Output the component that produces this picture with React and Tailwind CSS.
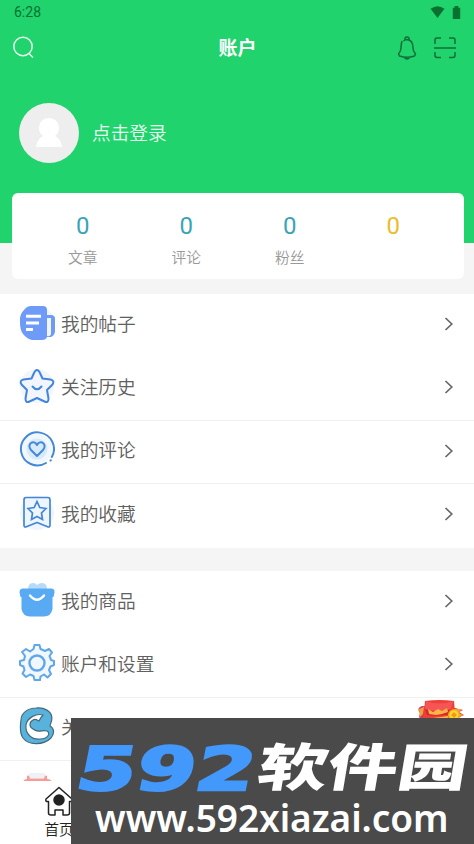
import React from "react";

const PostIcon = () => (
  <svg viewBox="0 0 36 36" className="size-9">
    <circle cx="18.5" cy="18" r="17" fill="#f0f5fe" />
    <path d="M12 1H24Q28 1 28 5V10H32Q36 10 36 14V27Q35 31 32 32H28Q27 35 23 35H13Q8 34 4 29Q1 25 1 18V14Q1 9 5 5Q8 1 12 1Z" fill="#6e9bf8" />
    <path d="M28 13H32V29Q31 32 28 31Z" fill="#f0f5fe" />
    <path d="M7 11.3H22M7 18H20M7 24.5H14" stroke="#fff" strokeWidth="3" />
  </svg>
);

const StarIcon = () => (
  <svg viewBox="0 0 36 36" className="size-9" fill="none" stroke="#4285dc" strokeWidth="2" strokeLinejoin="round" strokeLinecap="round">
    <circle cx="18" cy="18" r="17" fill="#f2f6fc" stroke="none" />
    <path d="M15.500 4Q18 0 20.500 4L23.500 10.500L31.500 11.500Q36 12.500 33.500 16.500L28 22L29.500 30.500Q29.500 35.500 25.500 33.500L18 30L10.500 33.500Q6.500 35.500 6.500 30.500L8 22L2.500 16.500Q0 12.500 4.500 11.500L12.500 10.500Z" />
    <path d="M13.500 18.500Q18 24 22.500 18.500" />
  </svg>
);

const CommentIcon = () => (
  <svg viewBox="0 0 36 36" className="size-9" fill="none" stroke="#4488d8" strokeWidth="2" strokeLinecap="round">
    <circle cx="18" cy="18" r="15" fill="#f0f7fe" stroke="none" />
    <circle cx="18" cy="18" r="10.500" fill="#d7eafb" stroke="none" />
    <path d="M27 32A16.500 16.500 0 1 1 32.800 26M31.500 29.500L31.800 29.200" />
    <path d="M18 25L12 19C7 13 15 8 18 14C21 8 29 13 24 19Z" strokeLinejoin="round" />
  </svg>
);

const FavoriteIcon = () => (
  <svg viewBox="0 0 36 36" className="size-9" fill="none" stroke="#4385d8" strokeWidth="1.700" strokeLinejoin="round" strokeLinecap="round">
    <circle cx="18" cy="18" r="17" fill="#f0f5fc" stroke="none" />
    <path d="M7 2.500H29Q31 2.500 31 5V30Q31 33 28 31.500L18 27.500L8 31.500Q5 33 5 30V5Q5 2.500 7 2.500Z" fill="#edf5fd" />
    <path d="M18 6.500L20.800 12.500L27 13.500L22.500 18L23.500 24.500L18 21.500L12.500 24.500L13.500 18L9 13.500L15.200 12.500Z" strokeLinejoin="miter" />
  </svg>
);

const GoodsIcon = () => (
  <svg viewBox="0 0 36 36" className="size-9">
    <path d="M9 7Q9 1 14 1Q17 1 18 3Q20 1 23 1Q28 1 28 7Z" fill="#b8daf9" />
    <path d="M4 6.500H32Q36 6.500 35.500 10.500L34.500 15H33.500V27Q32 34.500 25 34.500H11Q4 34.500 2.500 27V15H1.500L.5 10.500Q.5 6.500 4 6.500Z" fill="#58aaf2" />
    <path d="M11 13.500Q18 22 25 13.500" fill="none" stroke="white" strokeWidth="2.400" strokeLinecap="round" />
  </svg>
);

const GearIcon = () => (
  <svg viewBox="0 0 36 37" className="h-[37px] w-9" fill="#f0f7fe" stroke="#60a7e9" strokeWidth="2" strokeLinejoin="round">
    <path d="M15.500 1H20.500L21.500 5Q24 6 26 7L30 5L33 8.500L30.500 12Q31.500 14 32 16L35 17V21L31.500 22.500L30 26L32 30L28.500 33.500L25 30.500L21.500 32.500L21 36H15.500L14.500 32L11 30.500L7 33L3.500 29.500L5.500 26L4.500 22.500L1 21V17L5 16L6 12L3 8L7 5L11 7.500L14.500 5Z" />
    <circle cx="18" cy="19" r="7.500" strokeWidth="2.400" />
  </svg>
);

const AboutIcon = () => (
  <svg viewBox="0 0 36 38" className="h-[38px] w-9" stroke="#47687b" strokeWidth="1.200">
    <path d="M17 1C26 0 32 5 32.500 9C34 13 31 17 31 19C35 21 36 26 32 31C24 39 9 38 4 31C1 27 1 20 2 13C2 6 9 1 17 1Z" fill="#58b3dc" />
    <path d="M24 8C17 6 8 11 7 18C6 27 13 33 21 32C29 32 32 26 28 24C23 22 20 27 14 22C10 20 10 15 14 13C17 11 19 14 20 14C21 12 22 10 24 8Z" fill="white" />
  </svg>
);

const CalendarIcon = () => (
  <svg viewBox="0 0 36 36" className="size-9">
    <path d="M11 1H25L29 6H7Z" fill="#f0f1f4" />
    <path d="M4 10Q5 7 8 7V4Q10 2 11 6.500H25Q26 2 28 4V7Q32 7 33 10V33H4Z" fill="#f59b9b" />
  </svg>
);

const RedPacket = () => (
  <svg viewBox="0 0 48 24" className="h-6 w-12">
    <path d="M5 6Q-1 8 3 13L2 17L8 24H43L41 18L47 15L42 12L46 10L38 8" fill="#c93f64" />
    <path d="M2 9L7 7L6 14L3 17ZM38 9L45 9L41 13L47 15L39 18Z" fill="#f3a234" />
    <path d="M8 1Q22-1 37 1L39 24H5L7 11Z" fill="#ef3f39" />
    <path d="M9 1Q22 6 36 1L34 9Q21 13 8 9Z" fill="#f65556" />
    <path d="M8 9Q21 14 35 9L34 14Q20 17 10 15Z" fill="#d8252f" />
    <path d="M11 9L16 12L21 9L25 11L30 8L31 12L25 14L19 15L12 14ZM16 18L31 16L32 20L17 21Z" fill="#ffb447" />
    <circle cx="37" cy="15" r="6" fill="#f5ac14" />
    <circle cx="37" cy="15" r="4.500" fill="#ffd833" />
    <path d="M34 15L37 12L40 15L37 18Z" fill="#ee981e" />
  </svg>
);

const Chevron = () => (
  <svg viewBox="0 0 10 16" className="ml-auto mt-[3px] h-4 w-2.5" fill="none" stroke="#686868" strokeWidth="1.700">
    <path d="M1.500 2L7.800 8L1.500 14" />
  </svg>
);

function Row({ icon, label, line }) {
  return (
    <div className={"flex h-[63.3px] shrink-0 items-center border-b pl-[19px] pr-5 pb-[5px] " + (line ? "border-[#f0f0f0]" : "border-transparent")}>
      <span className="flex w-9 justify-center">{icon}</span>
      <span className="ml-1.5 whitespace-nowrap text-[18.7px] leading-7">{label}</span>
      <Chevron />
    </div>
  );
}

const stats = [["文章", "text-[#3aa4b7]"], ["评论", "text-[#3aa4b7]"], ["粉丝", "text-[#3aa4b7]"], ["", "text-[#ebbd2b]"]];

export default function App() {
  return (
    <div className="relative flex h-[844px] w-[474px] flex-col overflow-hidden bg-[#f5f5f5] font-['Noto_Sans_CJK_SC',sans-serif] font-[350] text-[#606060]">
      <header className="h-[243px] shrink-0 bg-[#20d36c]">
        <div className="flex h-6 items-center justify-between pl-3.5 pr-[13px] text-[#08712f]">
          <span className="font-['Roboto',sans-serif] text-[14px] font-normal">6:28</span>
          <div className="flex items-center gap-[7px]">
            <svg viewBox="0 0 16 13" className="h-3 w-[15px]" fill="#08712f"><path d="M.5 3Q8-2.500 15.500 3L8 13Z" /></svg>
            <svg viewBox="0 0 9 14" className="h-[13px] w-[9px]" fill="#08712f"><path d="M2.500 0H6.500V2H8.500V14H.5V2H2.500Z" /></svg>
          </div>
        </div>
        <div className="grid h-12 grid-cols-3 items-center pl-3 pr-[18px]">
          <svg viewBox="0 0 24 24" className="size-6" fill="none" stroke="#e7ffee" strokeWidth="1.500"><circle cx="11" cy="10.500" r="9.200" /><path d="M16.500 17L21 21.500" /></svg>
          <h1 className="pb-0.5 pl-[7px] text-center text-[19px] font-bold leading-7 text-white">账户</h1>
          <div className="flex items-center justify-end gap-[17px]">
            <svg viewBox="0 0 20 24" className="h-6 w-5" fill="none" stroke="#116d39" strokeWidth="1.500" strokeLinejoin="round"><path d="M5 5Q4 8 4 12Q4 15 1.500 18L2.500 20Q10 22.500 17.500 20L18.500 18Q16 15 16 12Q16 4 10 3.500Q8 3.500 6.500 5M8 3.500Q7.500 1 10 1Q12.500 1 12 3.500M7 21Q10 25 13 21" /></svg>
            <svg viewBox="0 0 22 22" className="size-[22px]" fill="none" stroke="#116d39" strokeWidth="1.500"><path d="M1 7V3Q1 1 3 1H7M15 1H19Q21 1 21 3V7M1 15V18Q1 20.500 3 20.500H7M15 20.500H19Q21 20.500 21 18V15M0 11H22" /></svg>
          </div>
        </div>
        <div className="flex h-[122px] items-center gap-[13px] pl-[19px]">
          <div className="flex size-[60px] items-center justify-center rounded-full bg-[#eee]">
            <svg viewBox="0 0 26 30" className="h-[30px] w-[26px]" fill="white"><path d="M13 0A10 10 0 0 1 19 18Q25 21 26 29H0Q1 21 7 18A10 10 0 0 1 13 0Z" /></svg>
          </div>
          <span className="pb-[3px] text-[18.7px] leading-7 text-[#e9fff1]">点击登录</span>
        </div>
      </header>
      <section className="relative z-10 -mt-[50px] mx-3 mr-[10px] grid h-[86px] shrink-0 grid-cols-4 rounded-md bg-white pl-[19px] pr-[19px]">
        {stats.map(([label, color], i) => (
          <div key={i} className="flex flex-col items-center pt-[18px]">
            <span className={"font-['Roboto',sans-serif] text-2xl font-normal leading-[30px] " + color}>0</span>
            <span className="mt-1.5 text-[14.7px] leading-5 text-[#999]">{label}</span>
          </div>
        ))}
      </section>
      <section className="mt-[15px] h-[254px] shrink-0 bg-white">
        <Row icon={<PostIcon />} label="我的帖子" />
        <Row icon={<StarIcon />} label="关注历史" line />
        <Row icon={<CommentIcon />} label="我的评论" line />
        <Row icon={<FavoriteIcon />} label="我的收藏" />
      </section>
      <section className="mt-[23px] shrink-0 bg-white">
        <Row icon={<GoodsIcon />} label="我的商品" />
        <Row icon={<GearIcon />} label="账户和设置" line />
        <Row icon={<AboutIcon />} label="关" line />
        <Row icon={<CalendarIcon />} label="" />
      </section>
      <div className="absolute left-[417px] top-[700px]"><RedPacket /></div>
      <nav className="absolute inset-x-0 bottom-0 z-20 flex h-[63px] bg-white">
        <div className="flex w-[118px] flex-col items-center pt-[5px] text-[#222]">
          <svg viewBox="0 0 30 30" className="size-[30px]" fill="none" stroke="#222" strokeWidth="1.500" strokeLinejoin="round"><path d="M15 1.500L28 13Q29 16 25.500 15.500V27Q25.500 29 23 29H19V24H11V29H7Q4.500 29 4.500 27V15.500Q1 16 2 13Z" /><circle cx="15" cy="14" r="5" fill="#222" /></svg>
          <span className="text-[14.5px] leading-[22px] mt-0.5">首页</span>
        </div>
      </nav>
      <aside className="absolute bottom-0 left-[71px] z-30 h-[126px] w-[403px] bg-[#4a4a4a]">
        <div className="flex h-[78px] items-start pt-[17px]">
          <div className="h-[60px] w-[183px] shrink-0">
            <div className="origin-bottom-left scale-x-[1.420] -skew-x-[8deg] whitespace-nowrap font-['DejaVu_Sans',sans-serif] text-[60px] font-bold leading-[68px] text-[#4398fb] [-webkit-text-stroke:2.500px_#4398fb]">592</div>
          </div>
          <div className="h-[60px] w-[220px]">
            <div className="origin-bottom-left scale-x-[1.370] -skew-x-[7deg] whitespace-nowrap text-[51px] font-black leading-[58px] text-white">软件园</div>
          </div>
        </div>
        <div className="ml-6 mt-[3px] whitespace-nowrap font-['Noto_Sans',sans-serif] text-[37px] font-semibold leading-[38px] tracking-[-0.050px] text-white">www.592xiazai.com</div>
      </aside>
    </div>
  );
}
